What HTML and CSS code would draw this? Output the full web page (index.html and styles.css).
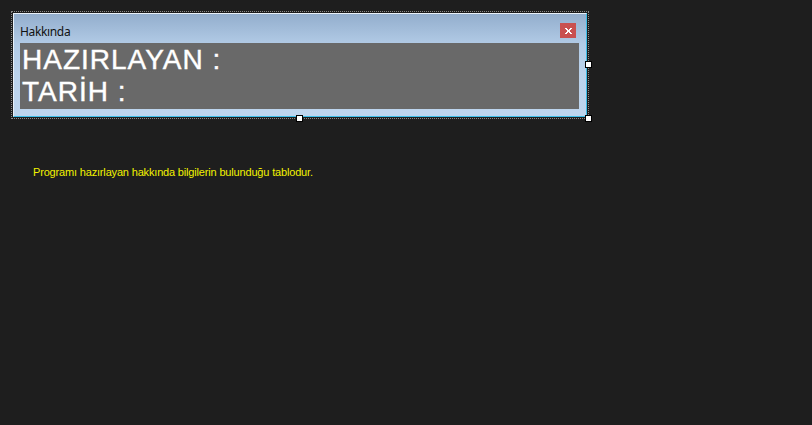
FILE: index.html
```html
<!DOCTYPE html>
<html lang="tr">
<head>
<meta charset="utf-8">
<title>Hakkında</title>
<link rel="stylesheet" href="styles.css">
</head>
<body>
<div class="surface">
  <div class="frame">
    <div class="panel">
      <div class="titlebar">
        <span class="title">Hakkında</span>
        <span class="close">
          <svg width="7" height="6" viewBox="0 0 7 6"><path d="M0 0h2v1h1v1h1V1h1V0h2v1H6v1H5v2h1v1h1v1H5V5H4V4H3v1H2v1H0V5h1V4h1V2H1V1H0z" fill="#fff"/></svg>
        </span>
      </div>
      <div class="info">
        <div class="line">HAZIRLAYAN :</div>
        <div class="line">TARİH :</div>
      </div>
    </div>
    <span class="handle h-right"></span>
    <span class="handle h-bottom"></span>
    <span class="handle h-corner"></span>
  </div>
  <p class="desc">Programı hazırlayan hakkında bilgilerin bulunduğu tablodur.</p>
</div>
</body>
</html>
```

FILE: styles.css
```css
html, body {
  margin: 0;
  padding: 0;
  background: #1e1e1e;
  height: 100%;
}
.surface {
  padding: 11px 0 0 11px;
}
.frame {
  position: relative;
  width: 576px;
  height: 106px;
  border: 1px dotted #8a8a8a;
  padding: 0;
}
.panel {
  box-sizing: border-box;
  margin: 1px 0 0 1px;
  width: 574px;
  height: 104px;
  border-top: 1px solid #e8f0f8;
  border-left: 1px solid #e8f0f8;
  border-right: 1px solid #3cbde8;
  border-bottom: 1px solid #3cbde8;
  background: linear-gradient(to bottom, #93aecd 0%, #b2cbe6 30%, #bbd3ec 60%, #bdd5ee 100%);
  padding: 0 7px 0 6px;
  display: flex;
  flex-direction: column;
}
.titlebar {
  height: 29px;
  display: flex;
  align-items: flex-start;
  justify-content: space-between;
}
.title {
  font-family: "Noto Sans", "DejaVu Sans", sans-serif;
  font-size: 12px;
  letter-spacing: -0.35px;
  color: #111;
  margin-top: 10px;
  line-height: 16px;
}
.close {
  margin-top: 9px;
  margin-right: 3px;
  width: 16px;
  height: 15px;
  background: #c95050;
  display: flex;
  align-items: center;
  justify-content: center;
}
.info {
  height: 66px;
  background: #696969;
  padding: 1px 0 0 2px;
  box-sizing: border-box;
}
.line {
  font-family: "Liberation Sans", Arial, sans-serif;
  font-size: 28px;
  line-height: 32px;
  letter-spacing: 1px;
  color: #fff;
  -webkit-text-stroke: 0.4px #fff;
  white-space: nowrap;
}
.handle {
  position: absolute;
  width: 5px;
  height: 5px;
  background: #fff;
  border: 1px solid #000;
}
.h-right {
  right: -4px;
  top: 49px;
}
.h-bottom {
  left: 284px;
  bottom: -4px;
}
.h-corner {
  right: -4px;
  bottom: -4px;
}
.desc {
  margin: 47px 0 0 22px;
  font-family: "Liberation Sans", Arial, sans-serif;
  font-size: 11px;
  letter-spacing: -0.17px;
  color: #f2f200;
}
```
